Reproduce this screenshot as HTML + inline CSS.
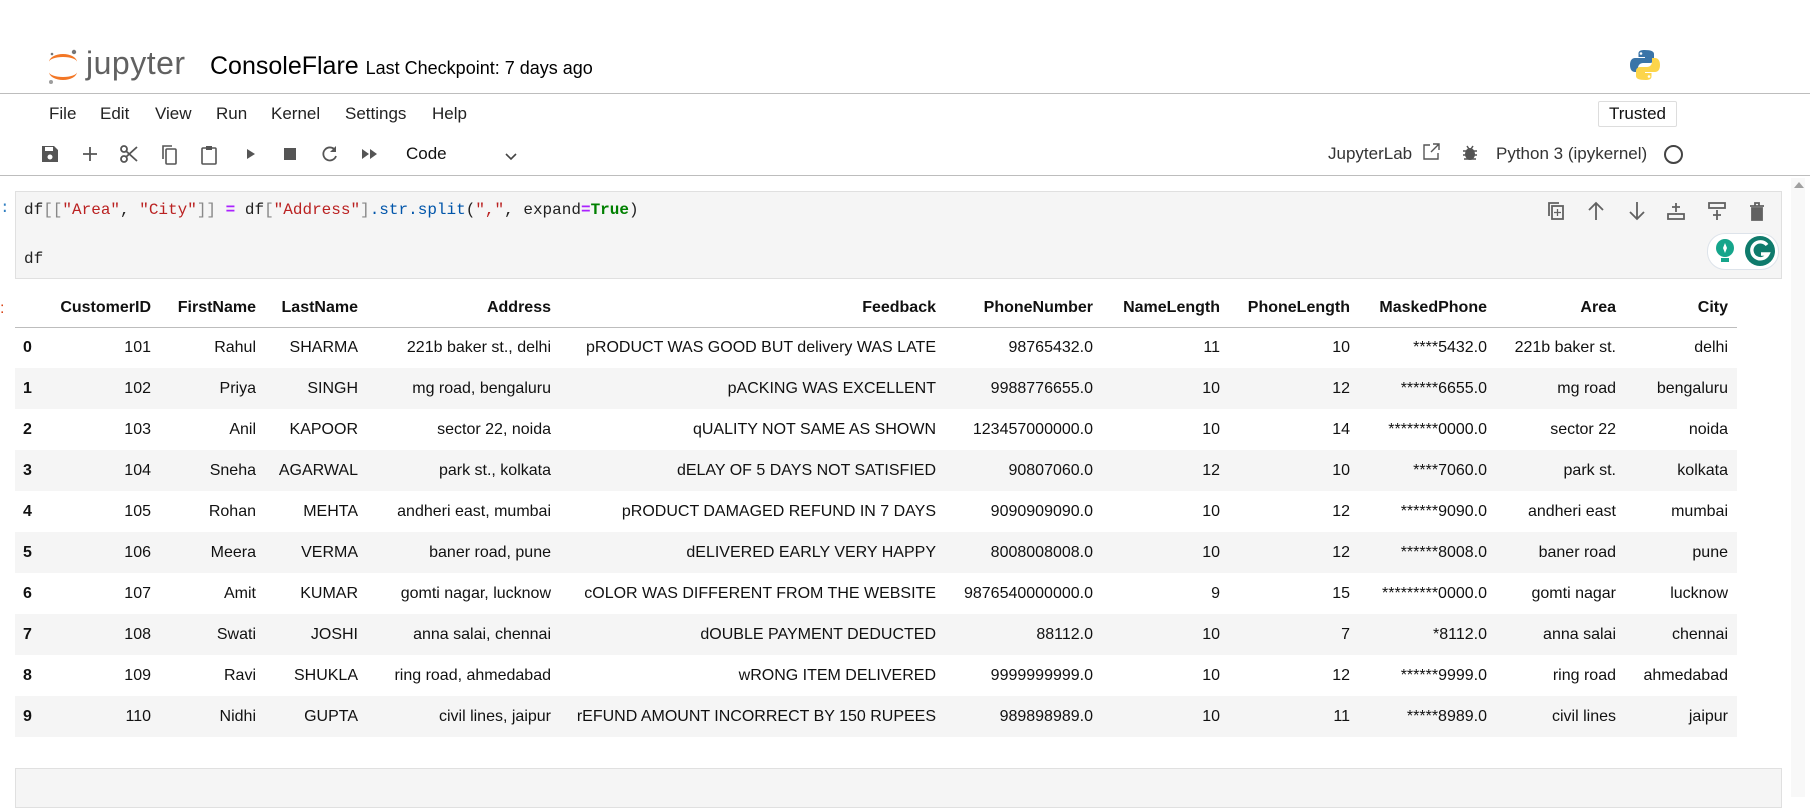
<!DOCTYPE html>
<html><head><meta charset="utf-8"><style>
*{margin:0;padding:0;box-sizing:border-box}
body{width:1816px;height:797px;overflow:hidden;background:#fff;font-family:"Liberation Sans",sans-serif;color:#212121;position:relative}
.a{position:absolute}
.menu span{position:absolute;top:104px;font-size:17px;color:#222}
.ic{position:absolute;top:144px}
.code{font-family:"Liberation Mono",monospace;font-size:16px;color:#212121}
table{position:absolute;left:15px;top:290px;width:1722px;border-collapse:collapse;table-layout:fixed;font-size:16px;color:#111}
td,th{text-align:right;padding:0 9px 0 0;white-space:nowrap;height:41px}
th{font-weight:bold;height:37px;border-bottom:1px solid #bdbdbd;vertical-align:middle}
tbody tr:nth-child(even){background:#f5f5f5}
td.i{text-align:left;padding-left:8px;font-weight:bold}
</style></head><body>
<svg class="a" style="left:46px;top:46px" width="34" height="40" viewBox="0 0 34 40">
<path d="M3 16 A14 8 0 0 1 31 16 A14 5 0 0 0 3 16Z" fill="#f37726"/>
<path d="M3 26 A14 8 0 0 0 31 26 A14 5 0 0 1 3 26Z" fill="#f37726"/>
<circle cx="28" cy="6" r="2.2" fill="#767677"/><circle cx="6" cy="8" r="1.3" fill="#767677"/><circle cx="5" cy="36" r="2" fill="#9e9e9e"/>
</svg>
<div class="a" style="left:86px;top:45px;font-size:32px;color:#616161;letter-spacing:0.5px">jupyter</div>
<div class="a" style="left:210px;top:52px;font-size:25px;color:#000">ConsoleFlare <span style="font-size:18px">Last Checkpoint: 7 days ago</span></div>
<svg class="a" style="left:1628px;top:48px" width="34" height="34" viewBox="0 0 34 34">
<path d="M16.5 2c-6 0-6 2.5-6 4v3h6.5v1H7c-3 0-5 2.5-5 7s2 7 5 7h3v-4c0-3 2.5-5 5-5h7c2.5 0 4-2 4-4V6c0-2.5-2.5-4-9.5-4z" fill="#3a74a8"/>
<path d="M17.5 32c6 0 6-2.5 6-4v-3H17v-1h10c3 0 5-2.5 5-7s-2-7-5-7h-3v4c0 3-2.5 5-5 5h-7c-2.5 0-4 2-4 4v5c0 2.5 2.5 4 9.5 4z" fill="#fcd54b"/>
<circle cx="13" cy="5.5" r="1.3" fill="#fff"/><circle cx="21" cy="28.5" r="1.3" fill="#fff"/></svg>
<div class="a" style="left:0;top:93px;width:1810px;height:1px;background:#bdbdbd"></div>
<div class="menu"><span style="left:49px">File</span><span style="left:100px">Edit</span><span style="left:155px">View</span><span style="left:216px">Run</span><span style="left:271px">Kernel</span><span style="left:345px">Settings</span><span style="left:432px">Help</span></div>
<div class="a" style="left:1598px;top:101px;width:79px;height:26px;border:1px solid #ddd;border-radius:2px;font-size:17px;text-align:center;line-height:24px;color:#111">Trusted</div>
<svg class="ic" style="left:41px" width="18" height="20" viewBox="0 0 18 20"><path d="M1 2h12l4 4v12H1z" fill="#555"/><rect x="4" y="3" width="8" height="4" fill="#fff"/><circle cx="9" cy="13" r="2.5" fill="#fff"/></svg>
<svg class="ic" style="left:81px" width="18" height="20" viewBox="0 0 18 20"><path d="M9 3v14M2 10h14" stroke="#555" stroke-width="1.8"/></svg>
<svg class="ic" style="left:119px" width="20" height="20" viewBox="0 0 20 20"><circle cx="5" cy="5" r="3" fill="none" stroke="#555" stroke-width="1.8"/><circle cx="5" cy="15" r="3" fill="none" stroke="#555" stroke-width="1.8"/><path d="M7 7l11 10M7 13L18 3" stroke="#555" stroke-width="1.8"/></svg>
<svg class="ic" style="left:160px" width="18" height="22" viewBox="0 0 18 22"><path d="M3 15V2h9" fill="none" stroke="#555" stroke-width="1.6"/><rect x="6" y="5" width="10" height="15" rx="1" fill="none" stroke="#555" stroke-width="1.6"/></svg>
<svg class="ic" style="left:200px" width="18" height="22" viewBox="0 0 18 22"><rect x="2" y="4" width="14" height="16" rx="1" fill="none" stroke="#555" stroke-width="1.6"/><rect x="6" y="2" width="6" height="4" fill="#555"/></svg>
<svg class="ic" style="left:244px" width="14" height="20" viewBox="0 0 14 20"><path d="M3 5l8 5-8 5z" fill="#555"/></svg>
<svg class="ic" style="left:283px" width="14" height="20" viewBox="0 0 14 20"><rect x="1" y="4" width="12" height="12" fill="#555"/></svg>
<svg class="ic" style="left:320px" width="20" height="20" viewBox="0 0 20 20"><path d="M15 6A6.5 6.5 0 1 0 16 12" fill="none" stroke="#555" stroke-width="1.8"/><path d="M16 2v6h-6z" fill="#555"/></svg>
<svg class="ic" style="left:360px" width="20" height="20" viewBox="0 0 20 20"><path d="M2 5l7 5-7 5zM10 5l7 5-7 5z" fill="#555"/></svg>
<div class="a" style="left:406px;top:144px;font-size:17px;color:#111">Code</div>
<svg class="a" style="left:504px;top:152px" width="14" height="10" viewBox="0 0 14 10"><path d="M2 2l5 5 5-5" fill="none" stroke="#444" stroke-width="1.6"/></svg>
<div class="a" style="left:1328px;top:144px;font-size:17px;color:#333">JupyterLab</div>
<svg class="a" style="left:1422px;top:143px" width="18" height="18" viewBox="0 0 18 18"><path d="M8 2H2v14h14v-6M11 1h6v6M17 1L9 9" fill="none" stroke="#555" stroke-width="1.4"/></svg>
<svg class="a" style="left:1462px;top:145px" width="16" height="16" viewBox="0 0 16 16"><ellipse cx="8" cy="9" rx="5" ry="6" fill="#555"/><path d="M1 6h14M1 10h14M2 14h12M5 1l2 3M11 1L9 4" stroke="#555" stroke-width="1.5"/></svg>
<div class="a" style="left:1496px;top:144px;font-size:17px;color:#333">Python 3 (ipykernel)</div>
<div class="a" style="left:1664px;top:145px;width:19px;height:19px;border:2px solid #444;border-radius:50%"></div>
<div class="a" style="left:0;top:175px;width:1810px;height:1px;background:#bdbdbd"></div>
<div class="a" style="left:1791px;top:178px;width:14px;height:619px;background:#f8f8f8"></div>
<svg class="a" style="left:1794px;top:180px" width="10" height="8"><path d="M0 8L5 2 10 8z" fill="#a0a0a0"/></svg>
<div class="a" style="left:0;top:199px;font-size:16px;color:#307fc1;font-family:'Liberation Mono',monospace">:</div>
<div class="a" style="left:15px;top:191px;width:1767px;height:88px;background:#f5f5f5;border:1px solid #e0e0e0"></div>
<div class="a code" style="left:24px;top:201px"><span>df</span><span style="color:#888">[[</span><span style="color:#ba2121">"Area"</span>, <span style="color:#ba2121">"City"</span><span style="color:#888">]]</span> <b style="color:#aa22ff">=</b> df<span style="color:#888">[</span><span style="color:#ba2121">"Address"</span><span style="color:#888">]</span><span style="color:#0055aa">.str.split</span>(<span style="color:#ba2121">","</span>, expand<b style="color:#aa22ff">=</b><b style="color:#008000">True</b>)</div>
<div class="a code" style="left:24px;top:250px">df</div>
<svg class="a" style="left:1546px;top:200px" width="230" height="22" viewBox="0 0 230 22" fill="none" stroke="#616161" stroke-width="1.8">
<path d="M3 16V3h10"/><rect x="6" y="6" width="11" height="13"/><path d="M11.5 9v7M8 12.5h7" stroke-width="1.3"/>
<path d="M50 20V3M43 10l7-7 7 7"/>
<path d="M91 2v17M84 12l7 7 7-7"/>
<rect x="122" y="14" width="16" height="5"/><path d="M130 3v9M126 7h8"/>
<rect x="163" y="3" width="16" height="5"/><path d="M171 10v10M167 15h8"/>
<path d="M204 6h14M209 6V3h4v3" /><path d="M206 8h10v12h-10z" fill="#616161"/>
</svg>
<div class="a" style="left:1707px;top:233px;width:72px;height:37px;background:#fff;border:1px solid #dde3ea;border-radius:18px"></div>
<svg class="a" style="left:1713px;top:236px" width="64" height="32" viewBox="0 0 64 32"><circle cx="12" cy="12" r="9" fill="#15a58b"/><rect x="8" y="22" width="8" height="4" fill="#15a58b"/><path d="M12 7l2 5-2 5-2-5z" fill="#fff"/><circle cx="47" cy="15" r="15" fill="#0f7b6c"/><path d="M54 9a8.5 8.5 0 1 0 1 9h-7" fill="none" stroke="#fff" stroke-width="3.4"/></svg>
<div class="a" style="left:0;top:300px;font-size:16px;color:#d84315">:</div>
<table><colgroup><col style="width:40px"><col style="width:105px"><col style="width:105px"><col style="width:102px"><col style="width:193px"><col style="width:385px"><col style="width:157px"><col style="width:127px"><col style="width:130px"><col style="width:137px"><col style="width:129px"><col style="width:112px"></colgroup>
<thead><tr><th></th><th>CustomerID</th><th>FirstName</th><th>LastName</th><th>Address</th><th>Feedback</th><th>PhoneNumber</th><th>NameLength</th><th>PhoneLength</th><th>MaskedPhone</th><th>Area</th><th>City</th></tr></thead>
<tbody>
<tr><td class="i">0</td><td>101</td><td>Rahul</td><td>SHARMA</td><td>221b baker st., delhi</td><td>pRODUCT WAS GOOD BUT delivery WAS LATE</td><td>98765432.0</td><td>11</td><td>10</td><td>****5432.0</td><td>221b baker st.</td><td>delhi</td></tr>
<tr><td class="i">1</td><td>102</td><td>Priya</td><td>SINGH</td><td>mg road, bengaluru</td><td>pACKING WAS EXCELLENT</td><td>9988776655.0</td><td>10</td><td>12</td><td>******6655.0</td><td>mg road</td><td>bengaluru</td></tr>
<tr><td class="i">2</td><td>103</td><td>Anil</td><td>KAPOOR</td><td>sector 22, noida</td><td>qUALITY NOT SAME AS SHOWN</td><td>123457000000.0</td><td>10</td><td>14</td><td>********0000.0</td><td>sector 22</td><td>noida</td></tr>
<tr><td class="i">3</td><td>104</td><td>Sneha</td><td>AGARWAL</td><td>park st., kolkata</td><td>dELAY OF 5 DAYS NOT SATISFIED</td><td>90807060.0</td><td>12</td><td>10</td><td>****7060.0</td><td>park st.</td><td>kolkata</td></tr>
<tr><td class="i">4</td><td>105</td><td>Rohan</td><td>MEHTA</td><td>andheri east, mumbai</td><td>pRODUCT DAMAGED REFUND IN 7 DAYS</td><td>9090909090.0</td><td>10</td><td>12</td><td>******9090.0</td><td>andheri east</td><td>mumbai</td></tr>
<tr><td class="i">5</td><td>106</td><td>Meera</td><td>VERMA</td><td>baner road, pune</td><td>dELIVERED EARLY VERY HAPPY</td><td>8008008008.0</td><td>10</td><td>12</td><td>******8008.0</td><td>baner road</td><td>pune</td></tr>
<tr><td class="i">6</td><td>107</td><td>Amit</td><td>KUMAR</td><td>gomti nagar, lucknow</td><td>cOLOR WAS DIFFERENT FROM THE WEBSITE</td><td>9876540000000.0</td><td>9</td><td>15</td><td>*********0000.0</td><td>gomti nagar</td><td>lucknow</td></tr>
<tr><td class="i">7</td><td>108</td><td>Swati</td><td>JOSHI</td><td>anna salai, chennai</td><td>dOUBLE PAYMENT DEDUCTED</td><td>88112.0</td><td>10</td><td>7</td><td>*8112.0</td><td>anna salai</td><td>chennai</td></tr>
<tr><td class="i">8</td><td>109</td><td>Ravi</td><td>SHUKLA</td><td>ring road, ahmedabad</td><td>wRONG ITEM DELIVERED</td><td>9999999999.0</td><td>10</td><td>12</td><td>******9999.0</td><td>ring road</td><td>ahmedabad</td></tr>
<tr><td class="i">9</td><td>110</td><td>Nidhi</td><td>GUPTA</td><td>civil lines, jaipur</td><td>rEFUND AMOUNT INCORRECT BY 150 RUPEES</td><td>989898989.0</td><td>10</td><td>11</td><td>*****8989.0</td><td>civil lines</td><td>jaipur</td></tr>
</tbody></table>
<div class="a" style="left:15px;top:768px;width:1767px;height:40px;background:#f5f5f5;border:1px solid #e0e0e0"></div>
</body></html>
